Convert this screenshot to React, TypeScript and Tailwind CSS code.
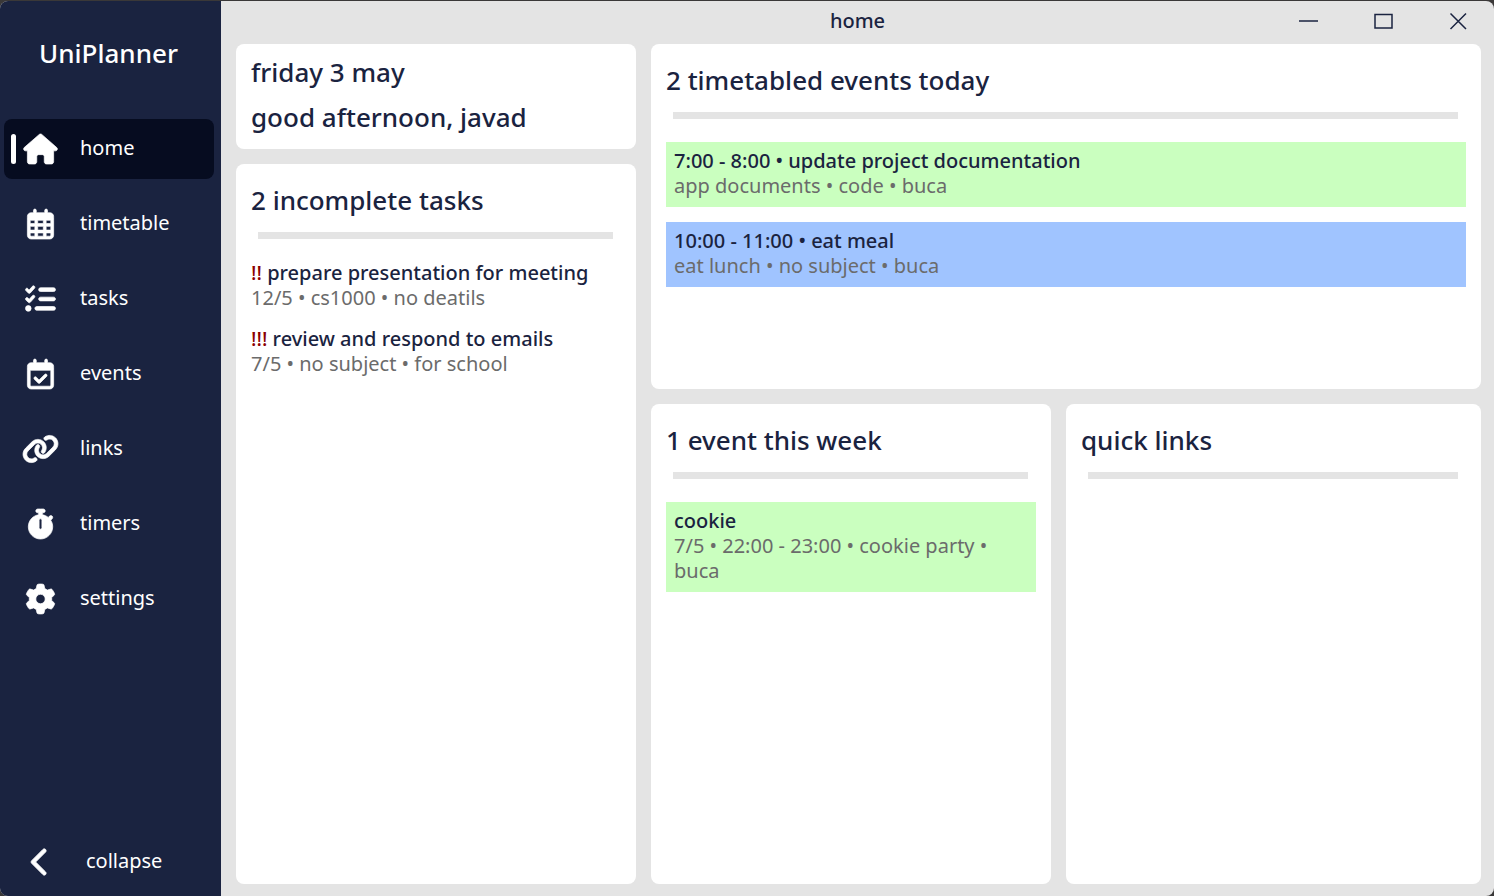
import type { ReactNode } from "react";
import type { IconType } from "react-icons";
import {
  FaChevronLeft,
  FaGear,
  FaHouse,
  FaLink,
  FaListCheck,
  FaRegCalendarCheck,
  FaRegCalendarDays,
  FaStopwatch,
} from "react-icons/fa6";

const navItems: { label: string; icon: IconType }[] = [
  { label: "home", icon: FaHouse },
  { label: "timetable", icon: FaRegCalendarDays },
  { label: "tasks", icon: FaListCheck },
  { label: "events", icon: FaRegCalendarCheck },
  { label: "links", icon: FaLink },
  { label: "timers", icon: FaStopwatch },
  { label: "settings", icon: FaGear },
];

const tasks = [
  { priority: "!!", title: "prepare presentation for meeting", detail: "12/5 • cs1000 • no deatils" },
  { priority: "!!!", title: "review and respond to emails", detail: "7/5 • no subject • for school" },
];

function Sidebar() {
  return (
    <aside className="flex w-[221px] shrink-0 flex-col bg-[#1a2340] text-white">
      <h1 className="pt-[31px] pr-1 text-center text-[26px] leading-[42px] font-medium">UniPlanner</h1>
      <nav className="mt-[45px] flex flex-col gap-[15px] pr-[7px] pl-1">
        {navItems.map(({ label, icon: Icon }, index) => (
          <button
            key={label}
            type="button"
            aria-current={index === 0 ? "page" : undefined}
            className={
              index === 0
                ? "flex h-[60px] items-center rounded-lg bg-[#060c20] pl-[7px] text-left"
                : "flex h-[60px] items-center rounded-lg pl-[7px] text-left"
            }
          >
            <span className={index === 0 ? "h-[30px] w-[5px] rounded-sm bg-white" : "h-[30px] w-[5px]"} />
            <Icon strokeWidth={12} className="ml-[6px] h-[30px] w-[37px] overflow-visible" />
            <span className="ml-[21px] pb-0.5 text-xl">{label}</span>
          </button>
        ))}
      </nav>
      <button type="button" className="mt-auto mb-1 flex h-[60px] items-center pl-[22px] text-left">
        <FaChevronLeft strokeWidth={14} className="h-[30px] w-[37px] overflow-visible" />
        <span className="ml-[27px] pb-0.5 text-xl">collapse</span>
      </button>
    </aside>
  );
}

function TitleBar() {
  return (
    <header className="grid h-[43px] shrink-0 grid-cols-[1fr_auto_1fr] items-center pb-0.5">
      <h2 className="col-start-2 pb-0.5 text-xl font-medium">home</h2>
      <div className="flex justify-end gap-10 pr-[18px]">
        <button type="button" aria-label="Minimize" className="flex h-[35px] w-[35px] items-center justify-center">
          <svg width="19" height="19" viewBox="0 0 19 19" fill="none" stroke="currentColor" strokeWidth="1.5">
            <path d="M0 9h19" />
          </svg>
        </button>
        <button type="button" aria-label="Maximize" className="flex h-[35px] w-[35px] items-center justify-center">
          <svg width="19" height="19" viewBox="0 0 19 19" fill="none" stroke="currentColor" strokeWidth="1.5">
            <path d="M1 2.5h17v13.5H1z" />
          </svg>
        </button>
        <button type="button" aria-label="Close" className="flex h-[35px] w-[35px] items-center justify-center">
          <svg width="19" height="19" viewBox="0 0 19 19" fill="none" stroke="currentColor" strokeWidth="1.5">
            <path d="M1.500 1.500l15.500 15.500M17 1.500L1.500 17" />
          </svg>
        </button>
      </div>
    </header>
  );
}

function Card({ title, className = "", children }: { title: string; className?: string; children?: ReactNode }) {
  return (
    <section className={`rounded-lg bg-white px-[15px] pt-[14px] pb-[15px] ${className}`}>
      <h3 className="text-[26px] leading-[44px] font-medium">{title}</h3>
      <hr className="mt-[10px] mr-2 mb-[23px] ml-[7px] h-[7px] border-0 bg-[#e4e4e4]" />
      {children}
    </section>
  );
}

function EventBlock({ title, detail, className }: { title: string; detail: string; className: string }) {
  return (
    <article className={`px-2 pt-[6px] pb-[9px] text-xl leading-[25px] ${className}`}>
      <h4 className="font-medium">{title}</h4>
      <p className="text-[#6b6b6b]">{detail}</p>
    </article>
  );
}

export default function App() {
  return (
    <div className="h-screen bg-[#3a3838] pt-px font-['Noto_Sans',sans-serif] text-[#1a2340]">
      <div className="flex h-full overflow-hidden rounded-lg bg-[#e4e4e4]">
        <Sidebar />
        <div className="flex min-w-0 flex-1 flex-col">
          <TitleBar />
          <main className="grid min-h-0 flex-1 grid-cols-[400fr_400fr_415fr] grid-rows-[345fr_480fr] gap-[15px] pr-[13px] pb-3 pl-[15px]">
            <div className="row-span-2 flex flex-col gap-[15px]">
              <section className="rounded-lg bg-white px-[15px] pt-[6px] pb-[9px] text-[26px] leading-[45px] font-medium">
                <p>friday 3 may</p>
                <p>good afternoon, javad</p>
              </section>
              <Card title="2 incomplete tasks" className="flex-1">
                <ul className="-mt-0.5 flex flex-col gap-4 text-xl leading-[25px]">
                  {tasks.map((task) => (
                    <li key={task.title}>
                      <h4 className="font-medium">
                        <span className="text-[#8b0000]">{task.priority}</span> {task.title}
                      </h4>
                      <p className="text-[#6b6b6b]">{task.detail}</p>
                    </li>
                  ))}
                </ul>
              </Card>
            </div>
            <Card title="2 timetabled events today" className="col-span-2">
              <div className="flex flex-col gap-[15px]">
                <EventBlock
                  title="7:00 - 8:00 • update project documentation"
                  detail="app documents • code • buca"
                  className="bg-[#caffbf]"
                />
                <EventBlock
                  title="10:00 - 11:00 • eat meal"
                  detail="eat lunch • no subject • buca"
                  className="bg-[#a0c4ff]"
                />
              </div>
            </Card>
            <Card title="1 event this week">
              <EventBlock
                title="cookie"
                detail="7/5 • 22:00 - 23:00 • cookie party • buca"
                className="bg-[#caffbf]"
              />
            </Card>
            <Card title="quick links" />
          </main>
        </div>
      </div>
    </div>
  );
}
